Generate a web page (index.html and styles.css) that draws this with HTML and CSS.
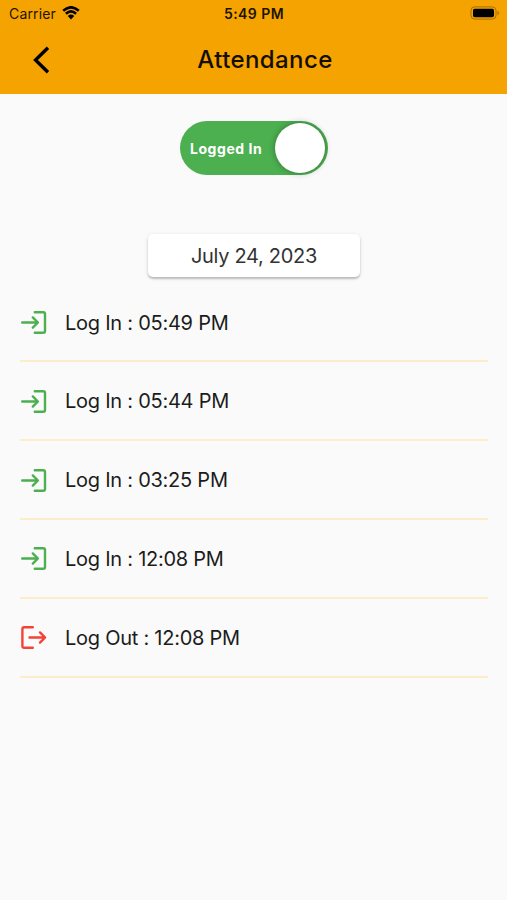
FILE: index.html
```html
<!DOCTYPE html>
<html lang="en">
<head>
    <meta charset="UTF-8">
    <meta name="viewport" content="width=device-width, initial-scale=1.0">
    <title>Attendance</title>
    <link rel="stylesheet" href="styles.css">
</head>
<body>
    <svg class="sprite" aria-hidden="true">
        <symbol id="login" viewBox="0 0 27 25">
            <path d="M14.8 2.2H23.2Q25 2.2 25 4V21Q25 22.8 23.2 22.8H14.8M2.2 12.5H17.5M12.8 7.4L17.9 12.5L12.8 17.6"/>
        </symbol>
        <symbol id="logout" viewBox="0 0 27 25">
            <path d="M12.8 2.2H4.2Q2.4 2.2 2.4 4V21Q2.4 22.8 4.2 22.8H12.8M9.5 12.5H24.8M20 7.4L25.1 12.5L20 17.6"/>
        </symbol>
    </svg>

    <header class="header">
        <div class="status-bar">
            <div class="carrier">
                <span>Carrier</span>
                <svg class="wifi" viewBox="0 0 18 14">
                    <path d="M1.2 4.7Q9 -2.1 16.8 4.7M3.9 7.7Q9 3.2 14.1 7.7"/>
                    <path class="wifi-dot" d="M5.8 10Q9 7.2 12.2 10L9 13.5Z"/>
                </svg>
            </div>
            <span class="time">5:49 PM</span>
            <div class="battery-wrap">
                <svg class="battery" viewBox="0 0 30 14">
                    <rect class="battery-case" x="1" y="0.9" width="25" height="12.2" rx="3.6"/>
                    <rect x="3" y="2.8" width="21" height="8.4" rx="1.6"/>
                    <path class="battery-tip" d="M27.5 4.7Q30.5 7 27.5 9.3Z"/>
                </svg>
            </div>
        </div>
        <div class="app-bar">
            <svg class="back" viewBox="0 0 18 28">
                <path d="M16 1.8L3.5 14L16 26.2"/>
            </svg>
            <h1 class="title">Attendance</h1>
        </div>
    </header>

    <main class="content">
        <div class="toggle">
            <span class="toggle-label">Logged In</span>
            <span class="knob"></span>
        </div>

        <button class="date">July 24, 2023</button>

        <ul class="log-list">
            <li class="log"><svg class="icon in"><use href="#login"/></svg><span>Log In : 05:49 PM</span></li>
            <li class="log"><svg class="icon in"><use href="#login"/></svg><span>Log In : 05:44 PM</span></li>
            <li class="log"><svg class="icon in"><use href="#login"/></svg><span>Log In : 03:25 PM</span></li>
            <li class="log"><svg class="icon in"><use href="#login"/></svg><span>Log In : 12:08 PM</span></li>
            <li class="log"><svg class="icon out"><use href="#logout"/></svg><span>Log Out : 12:08 PM</span></li>
        </ul>
    </main>
</body>
</html>
```
FILE: styles.css
```css
:root {
    --primary-color: #f5a300;
    --in-color: #4caf50;
    --out-color: #f44336;
    --background-color: #fafafa;
    --line-color: #fdedc9;
}

* {
    margin: 0;
    padding: 0;
    box-sizing: border-box;
}

body {
    min-height: 900px;
    font-family: Inter, "Liberation Sans", sans-serif;
    background-color: var(--background-color);
    color: #1c1c1c;
}

.sprite {
    display: none;
}

/* Header */
.header {
    height: 94px;
    background-color: var(--primary-color);
}

.status-bar {
    display: grid;
    grid-template-columns: 1fr auto 1fr;
    align-items: center;
    height: 26px;
    padding: 0 7px 0 9px;
    color: #1d1400;
    font-size: 14px;
}

.carrier {
    display: flex;
    align-items: center;
    gap: 6px;
    letter-spacing: 0.15px;
}

.wifi {
    width: 18px;
    height: 14px;
    fill: none;
    stroke: #000;
    stroke-width: 2.6;
}

.wifi-dot {
    fill: #000;
    stroke: none;
}

.time {
    margin-left: -1px;
    font-weight: 600;
    letter-spacing: 0.45px;
}

.battery-wrap {
    display: flex;
    justify-content: flex-end;
}

.battery {
    width: 30px;
    height: 14px;
}

.battery-case {
    fill: none;
    stroke: #a66f00;
}

.battery-tip {
    fill: #a66f00;
}

.app-bar {
    display: grid;
    grid-template-columns: 1fr auto 1fr;
    align-items: center;
    height: 67px;
    padding: 0 9px 0 32px;
}

.back {
    width: 18px;
    height: 28px;
    fill: none;
    stroke: #000;
    stroke-width: 3.4;
}

.title {
    color: #140e00;
    font-size: 24px;
    font-weight: 500;
    letter-spacing: 0.4px;
}

/* Content */
.content {
    display: flex;
    flex-direction: column;
    align-items: center;
    padding: 27px 19px 0 20px;
}

.toggle {
    display: flex;
    align-items: center;
    justify-content: space-between;
    width: 148px;
    height: 54px;
    padding: 0 3px 0 10px;
    border-radius: 28px;
    background-color: var(--in-color);
}

.toggle-label {
    color: #fff;
    font-size: 14px;
    font-weight: 700;
    letter-spacing: 0.55px;
}

.knob {
    width: 50px;
    height: 50px;
    border-radius: 50%;
    background-color: #fff;
    box-shadow: 0 0 6px rgba(0, 0, 0, 0.35);
}

.date {
    width: 212px;
    height: 43px;
    margin-top: 59px;
    border: none;
    border-radius: 5px;
    background-color: #fff;
    box-shadow: 0 2px 2px rgba(0, 0, 0, 0.2), 0 1px 4px rgba(0, 0, 0, 0.1);
    color: #333;
    font-family: inherit;
    font-size: 20px;
    letter-spacing: -0.3px;
}

/* Log list */
.log-list {
    width: 100%;
    margin-top: 6.7px;
    list-style: none;
}

.log {
    display: flex;
    align-items: center;
    gap: 18px;
    height: 78.8px;
    padding-top: 1px;
    border-bottom: 2px solid var(--line-color);
    font-size: 20px;
    letter-spacing: -0.25px;
}

.icon {
    width: 27px;
    height: 25px;
    fill: none;
    stroke-width: 2.4;
    stroke-linecap: round;
    stroke-linejoin: round;
}

.in {
    stroke: var(--in-color);
}

.out {
    stroke: var(--out-color);
}
```
